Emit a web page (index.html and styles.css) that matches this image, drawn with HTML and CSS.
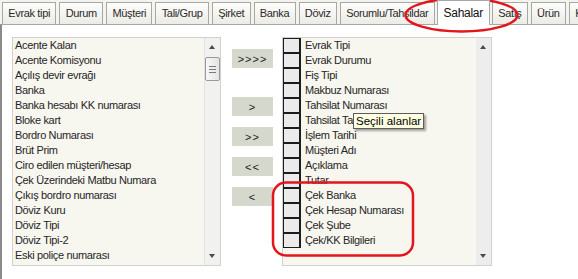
FILE: index.html
```html
<!DOCTYPE html>
<html lang="tr">
  <head>
    <meta charset="UTF-8" />
    <title>Sahalar</title>
    <link rel="stylesheet" href="styles.css">
  </head>
  <body>
    <div class="window">
      <div class="tabs">
        <span class="tab">Evrak tipi</span>
        <span class="tab">Durum</span>
        <span class="tab">Müşteri</span>
        <span class="tab">Tali/Grup</span>
        <span class="tab">Şirket</span>
        <span class="tab">Banka</span>
        <span class="tab">Döviz</span>
        <span class="tab">Sorumlu/Tahsildar</span>
        <span class="tab active">Sahalar</span>
        <span class="tab">Satış</span>
        <span class="tab">Ürün</span>
        <span class="tab">Kullanıcı</span>
      </div>

      <div class="panel">
        <div class="listbox source">
          <ul class="items">
            <li>Acente Kalan</li>
            <li>Acente Komisyonu</li>
            <li>Açılış devir evrağı</li>
            <li>Banka</li>
            <li>Banka hesabı KK numarası</li>
            <li>Bloke kart</li>
            <li>Bordro Numarası</li>
            <li>Brüt Prim</li>
            <li>Ciro edilen müşteri/hesap</li>
            <li>Çek Üzerindeki Matbu Numara</li>
            <li>Çıkış bordro numarası</li>
            <li>Döviz Kuru</li>
            <li>Döviz Tipi</li>
            <li>Döviz Tipi-2</li>
            <li>Eski poliçe numarası</li>
          </ul>
          <div class="scrollbar">
            <span class="arrow up"></span>
            <span class="thumb"><i></i><i></i><i></i></span>
            <span class="arrow down"></span>
          </div>
        </div>

        <div class="movers">
          <button type="button" class="mover first">&gt;&gt;&gt;&gt;</button>
          <button type="button" class="mover">&gt;</button>
          <button type="button" class="mover">&gt;&gt;</button>
          <button type="button" class="mover">&lt;&lt;</button>
          <button type="button" class="mover">&lt;</button>
        </div>

        <div class="listbox target">
          <ul class="items rows">
            <li><span class="box"></span>Evrak Tipi</li>
            <li><span class="box"></span>Evrak Durumu</li>
            <li><span class="box"></span>Fiş Tipi</li>
            <li><span class="box"></span>Makbuz Numarası</li>
            <li><span class="box"></span>Tahsilat Numarası</li>
            <li><span class="box"></span>Tahsilat Tarihi</li>
            <li><span class="box"></span>İşlem Tarihi</li>
            <li><span class="box"></span>Müşteri Adı</li>
            <li><span class="box"></span>Açıklama</li>
            <li><span class="box"></span>Tutar</li>
            <li><span class="box"></span>Çek Banka</li>
            <li><span class="box"></span>Çek Hesap Numarası</li>
            <li><span class="box"></span>Çek Şube</li>
            <li><span class="box"></span>Çek/KK Bilgileri</li>
          </ul>
          <div class="scrollbar disabled">
            <span class="arrow up"></span>
            <span class="arrow down"></span>
          </div>
        </div>
      </div>

      <div class="tooltip">Seçili alanlar</div>

      <svg class="marks" width="578" height="279" viewBox="0 0 578 279">
        <ellipse cx="461.5" cy="15" rx="56" ry="16.5" />
        <rect x="273" y="182.5" width="140" height="73" rx="13" ry="13" />
      </svg>
    </div>
  </body>
</html>
```

FILE: styles.css
```css
body {
  margin: 0;
  background: #ffffff;
  font-family: "Liberation Sans", Arial, sans-serif;
  font-size: 11px;
  letter-spacing: -0.35px;
  color: #000000;
}

.window {
  position: relative;
  width: 578px;
  height: 279px;
  overflow: hidden;
}

/* tab strip */
.tabs {
  display: flex;
  align-items: flex-end;
  gap: 3px;
  height: 24px;
  padding-left: 2px;
  background: #f4f3ee;
  white-space: nowrap;
}

.tab {
  flex: none;
  height: 21px;
  line-height: 21px;
  padding: 0 5.3px;
  border: 1px solid #a5a9a6;
  border-bottom: none;
  background: linear-gradient(#fdfdfc, #ecebe5);
  color: #2a2a2a;
}

.tab.active {
  position: relative;
  z-index: 1;
  height: 24px;
  line-height: 25px;
  margin: 0 -1px -1px;
  padding: 0 6px;
  background: #ffffff;
  font-size: 12px;
  letter-spacing: -0.3px;
  color: #111;
}

/* content panel */
.panel {
  display: flex;
  align-items: flex-start;
  height: 254px;
  padding: 12px 0 0 10px;
  border-top: 1px solid #a5a9a6;
  border-left: 2px solid #8a8a8a;
  background: #ffffff;
}

.listbox {
  display: flex;
  height: 227px;
  border: 1px solid #d0d0cc;
  background: #f7f6ef;
}

.source {
  width: 207px;
}

.target {
  width: 208px;
  margin-left: 9px;
}

.items {
  flex: 1;
  margin: 0;
  padding: 0;
  list-style: none;
  overflow: hidden;
}

.items li {
  height: 15px;
  line-height: 15px;
  padding-left: 2px;
  white-space: nowrap;
  color: #262626;
}

.rows li {
  display: flex;
  align-items: center;
  padding-left: 0;
}

.box {
  flex: none;
  width: 15px;
  height: 13px;
  margin-right: 4px;
  border: 1px solid #1c1c1c;
  border-right-width: 2px;
  background: #ebebeb;
}

/* scrollbars */
.scrollbar {
  position: relative;
  flex: none;
  width: 15px;
  background: #f1f1ef;
  border-left: 1px solid #e2e2de;
}

.scrollbar.disabled {
  background: #ededed;
  border-left: 1px solid #f8f8f8;
}

.arrow {
  position: absolute;
  left: 4px;
  width: 0;
  height: 0;
  border-left: 3.5px solid transparent;
  border-right: 3.5px solid transparent;
}

.arrow.up {
  top: 7px;
  border-bottom: 4px solid #4a4a4a;
}

.arrow.down {
  bottom: 7px;
  border-top: 4px solid #4a4a4a;
}

.thumb {
  position: absolute;
  top: 19px;
  left: 0;
  width: 13px;
  height: 22px;
  border: 1px solid #9a9a9a;
  border-radius: 2px;
  background: linear-gradient(90deg, #f8f8f8, #e4e4e4);
  display: flex;
  flex-direction: column;
  align-items: center;
  justify-content: center;
  gap: 2px;
}

.thumb i {
  width: 7px;
  height: 1px;
  background: #7a7a7a;
}

/* move buttons */
.movers {
  display: flex;
  flex-direction: column;
  gap: 11px;
  width: 41px;
  margin-left: 11px;
  padding-top: 12px;
}

.mover {
  width: 41px;
  height: 19px;
  padding: 0;
  border: none;
  background: #d5d8cd;
  font-family: "Liberation Sans", Arial, sans-serif;
  font-size: 11px;
  letter-spacing: 1px;
  color: #222;
}

.mover.first {
  margin-bottom: 18px;
}

/* overlays */
.tooltip {
  position: absolute;
  left: 353px;
  top: 113px;
  height: 14px;
  line-height: 14px;
  padding: 0 2px;
  border: 1px solid #5c5c5c;
  background: #ffffe1;
  font-size: 11.5px;
  letter-spacing: 0;
  box-shadow: 2px 2px 2px rgba(0, 0, 0, 0.35);
}

.marks {
  position: absolute;
  left: 0;
  top: 0;
  pointer-events: none;
}

.marks ellipse,
.marks rect {
  fill: none;
  stroke: #e3161d;
  stroke-width: 2.5;
}
```
